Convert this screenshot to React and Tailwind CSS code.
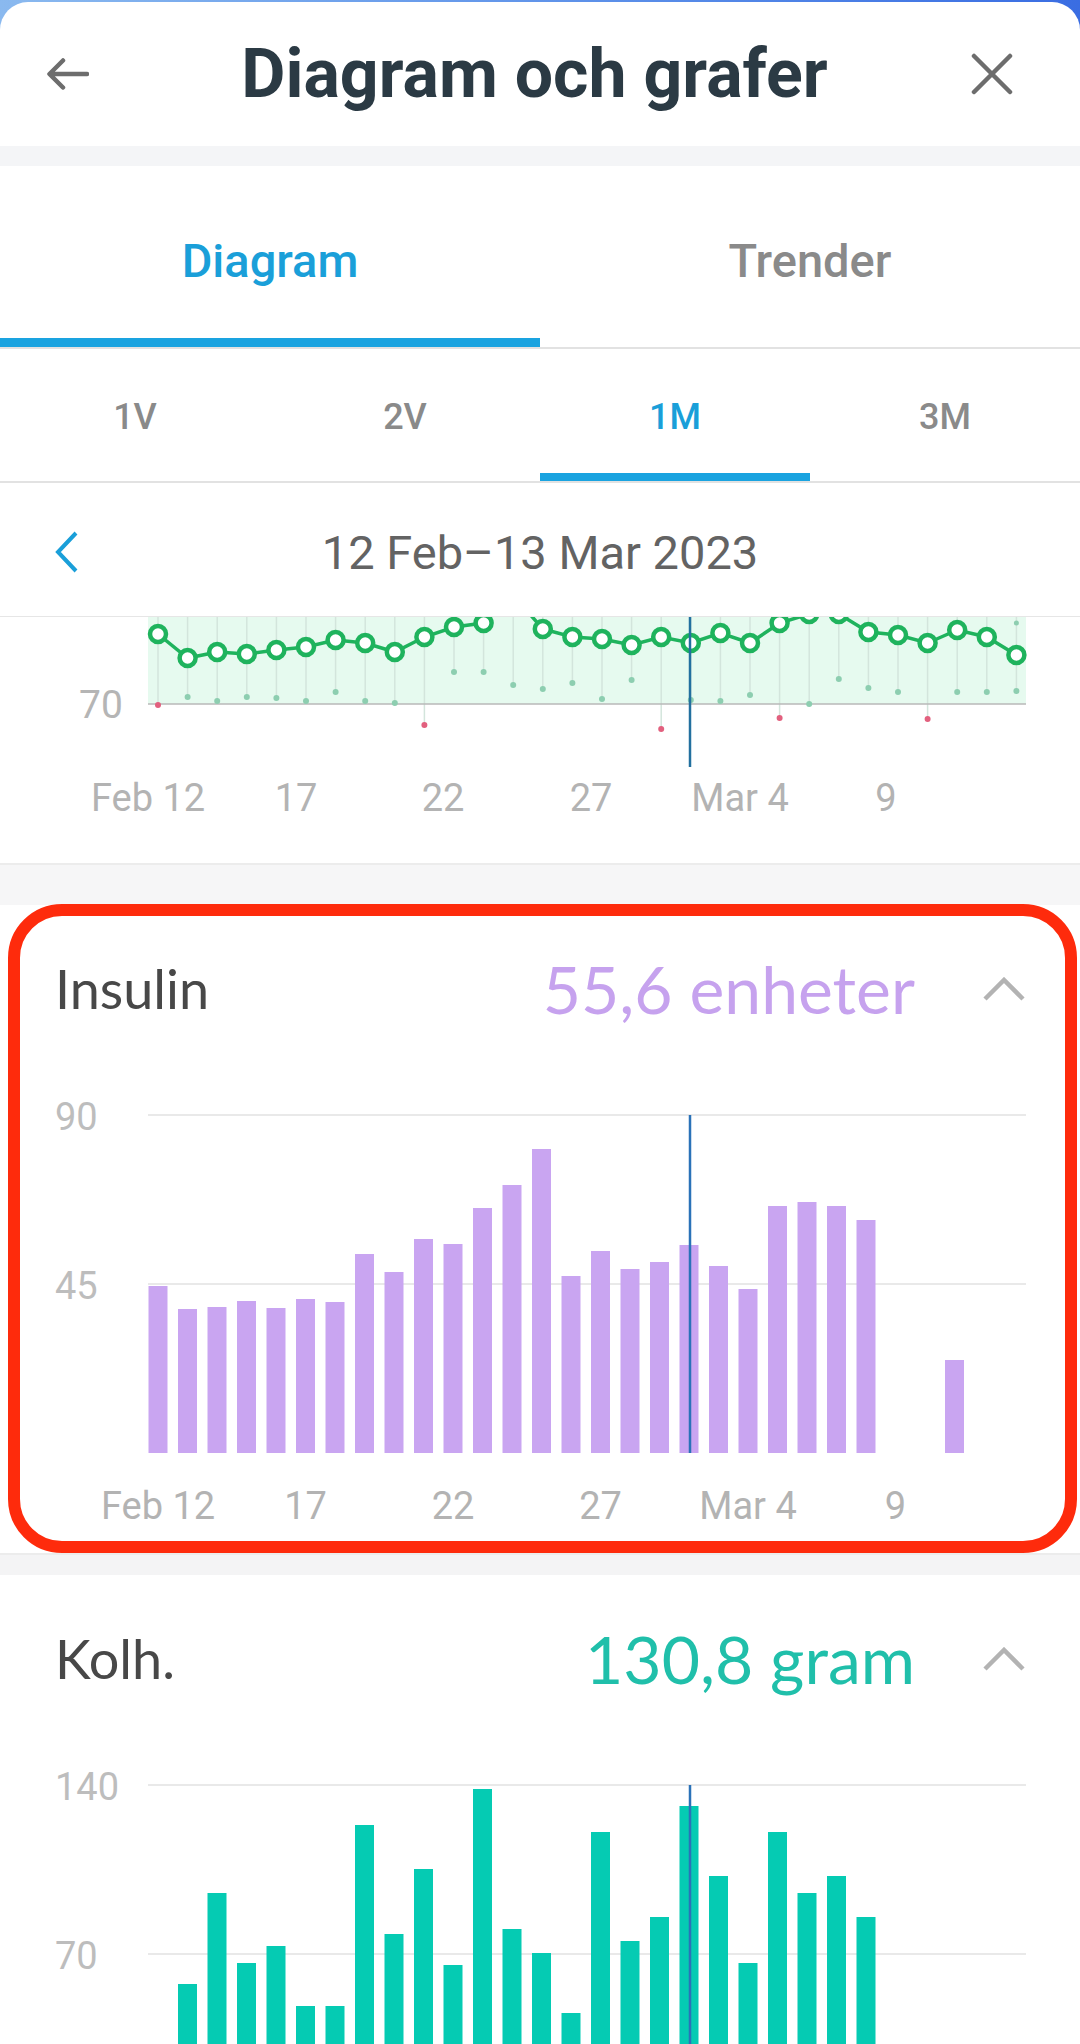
import React from "react";

const gTops = [634,658,652,654,650,647,640,643,652,637,627,623,595,629,637,639,645,637,643,633,643,623,614,614,632,635,643,630,637,655];
const gDots = [[705,1],[697],[701],[697],[698],[701],[692],[701],[703],[725,1],[672],[672],[685],[689],[683],[699],[680],[729,1],[700],[701],[695],[718,1],[704],[679],[688],[692],[719,1],[692],[692],[691]];

const insulin = [167,144,146,152,145,154,151,199,181,214,209,245,268,304,177,202,184,191,208,187,164,247,251,247,233,0,0,93];
const kolh = [0,139,230,160,177,117,117,298,189,254,158,334,194,170,110,291,182,206,317,247,160,291,230,247,206];

const gx = (i) => 158 + i * 29.6;
const bx = (i) => 158 + i * 29.5;

function GlucoseChart() {
  const pts = gTops.map((t, i) => `${gx(i)},${t - 617}`).join(" ");
  const labels = [["Feb 12", 148], ["17", 296], ["22", 443], ["27", 591], ["Mar 4", 740], ["9", 886]];
  return (
    <svg width="1080" height="246" className="block">
      <rect x="148" y="0" width="878" height="87" fill="#e6faef" />
      {gDots.map((d, i) => (
        <line key={"v" + i} x1={gx(i)} y1="0" x2={gx(i)} y2={d[0] - 617} stroke="#d3e5dc" strokeWidth="1.5" />
      ))}
      <line x1="148" y1="87" x2="1026" y2="87" stroke="#b8b8b8" strokeWidth="1.5" />
      <polyline points={pts} fill="none" stroke="#1fb35d" strokeWidth="3.5" />
      {gTops.map((t, i) => (
        <circle key={"c" + i} cx={gx(i)} cy={t - 617} r="8" fill="#ffffff" stroke="#1fb35d" strokeWidth="4.5" />
      ))}
      {gDots.map((d, i) => (
        <circle key={"d" + i} cx={gx(i)} cy={d[0] - 617} r="3" fill={d[1] ? "#e2607e" : "#8dceb0"} />
      ))}
      <circle cx={gx(29)} cy="6" r="2.5" fill="#8dceb0" />
      <line x1="690" y1="0" x2="690" y2="150" stroke="#22709f" strokeWidth="2.5" />
      <text x="79" y="101" fontFamily="Roboto, sans-serif" fontSize="39" fill="#b5b5b5">70</text>
      {labels.map(([t, x]) => (
        <text key={t} x={x} y="194" textAnchor="middle" fontFamily="Roboto, sans-serif" fontSize="38" fill="#b3b3b3">{t}</text>
      ))}
    </svg>
  );
}

function BarChart({ data, color, yTop, yMid, height, showLabels }) {
  const base = 380;
  const labels = [["Feb 12", 158], ["17", 305.5], ["22", 453], ["27", 600.5], ["Mar 4", 748], ["9", 895.5]];
  return (
    <svg width="1080" height={height} className="block">
      <line x1="148" y1="42" x2="1026" y2="42" stroke="#e9e9e9" strokeWidth="2" />
      <line x1="148" y1="211" x2="1026" y2="211" stroke="#e9e9e9" strokeWidth="2" />
      <text x="55" y="57" fontFamily="Roboto, sans-serif" fontSize="38" fill="#bdbdbd">{yTop}</text>
      <text x="55" y="226" fontFamily="Roboto, sans-serif" fontSize="38" fill="#bdbdbd">{yMid}</text>
      {data.map((h, i) =>
        h > 0 ? <rect key={i} x={bx(i) - 9.5} y={base - h} width="19" height={h} fill={color} /> : null
      )}
      <line x1="690" y1="42" x2="690" y2={Math.min(base, height)} stroke="#2a72b8" strokeWidth="2.5" />
      {showLabels &&
        labels.map(([t, x]) => (
          <text key={t} x={x} y="446" textAnchor="middle" fontFamily="Roboto, sans-serif" fontSize="38" fill="#b3b3b3">{t}</text>
        ))}
    </svg>
  );
}

function Chevron() {
  return (
    <svg width="42" height="24" viewBox="0 0 42 24" className="block">
      <polyline points="2,22 21,3 40,22" fill="none" stroke="#b3b3b3" strokeWidth="4.5" />
    </svg>
  );
}

function CardHeader({ label, value, color }) {
  return (
    <div className="h-[168px] flex items-center pl-[55px] pr-[55px] font-[Lato]">
      <div className="text-[54px] leading-none text-[#484848]">{label}</div>
      <div className="flex-1" />
      <div className={`text-[66px] leading-none ${color}`}>{value}</div>
      <div className="w-[68px]" />
      <Chevron />
    </div>
  );
}

export default function App() {
  return (
    <div className="relative w-[1080px] h-[2044px] overflow-hidden bg-gradient-to-r from-[#8ab9ef] to-[#3a6de2] font-[Roboto]">
      <div className="mt-[2px] h-[2042px] bg-white rounded-t-[28px] overflow-hidden flex flex-col">
        {/* header */}
        <div className="h-[144px] flex items-center shrink-0">
          <div className="w-[150px] pl-[47px]">
            <svg width="42" height="32" viewBox="0 0 42 32" className="block">
              <path d="M40 16H3M16 2.5L2.5 16L16 29.5" fill="none" stroke="#6d6d6d" strokeWidth="4.5" strokeLinecap="round" strokeLinejoin="round" />
            </svg>
          </div>
          <div className="flex-1 text-center pr-[11px] text-[68px] leading-none font-bold text-[#2b3a44]">Diagram och grafer</div>
          <div className="w-[150px] flex justify-end pr-[67px]">
            <svg width="42" height="42" viewBox="0 0 42 42" className="block">
              <path d="M3 3L39 39M39 3L3 39" fill="none" stroke="#6d6d6d" strokeWidth="4.5" strokeLinecap="round" />
            </svg>
          </div>
        </div>
        <div className="h-[20px] bg-[#f4f5f7] shrink-0" />

        {/* main tabs */}
        <div className="flex border-b-2 border-[#e2e2e2] shrink-0">
          <div className="flex-1 flex flex-col">
            <div className="h-[172px] pt-[16px] flex items-center justify-center text-[47px] leading-none font-medium text-[#1a9fd9]">Diagram</div>
            <div className="h-[9px] bg-[#1aa3e0]" />
          </div>
          <div className="flex-1 flex flex-col">
            <div className="h-[172px] pt-[16px] flex items-center justify-center text-[47px] leading-none font-medium text-[#8a8a8a]">Trender</div>
            <div className="h-[9px]" />
          </div>
        </div>

        {/* period tabs */}
        <div className="flex border-b-2 border-[#e2e2e2] shrink-0">
          {["1V", "2V", "1M", "3M"].map((p) => (
            <div key={p} className="flex-1 flex flex-col">
              <div className={`h-[124px] pt-[12px] flex items-center justify-center text-[36px] leading-none font-medium ${p === "1M" ? "text-[#1a9fd9]" : "text-[#8a8a8a]"}`}>{p}</div>
              <div className={`h-[8px] ${p === "1M" ? "bg-[#1aa3e0]" : ""}`} />
            </div>
          ))}
        </div>

        {/* date row */}
        <div className="h-[134px] border-b border-[#e6e6e6] flex items-center pt-[5px] relative shrink-0">
          <div className="w-[150px] pl-[55px]">
            <svg width="24" height="42" viewBox="0 0 24 42" className="block">
              <polyline points="21,2 3,21 21,40" fill="none" stroke="#1a9fd9" strokeWidth="4" />
            </svg>
          </div>
          <div className="flex-1 text-center pr-[150px] text-[47px] leading-none text-[#636363]">12 Feb–13 Mar 2023</div>
        </div>

        {/* glucose chart */}
        <div className="h-[248px] border-b-2 border-[#ececec] shrink-0">
          <GlucoseChart />
        </div>
        <div className="h-[40px] bg-[#f6f6f7] shrink-0" />

        {/* insulin */}
        <div className="h-[648px] bg-white shrink-0">
          <CardHeader label="Insulin" value="55,6 enheter" color="text-[#c6a2ee]" />
          <BarChart data={insulin} color="#c9a5f1" yTop="90" yMid="45" height={480} showLabels />
        </div>
        <div className="h-[22px] bg-[#f4f4f5] border-t-2 border-[#ececec] shrink-0" />

        {/* kolh */}
        <div className="flex-1 bg-white">
          <CardHeader label="Kolh." value="130,8 gram" color="text-[#20bfaa]" />
          <BarChart data={kolh} color="#05cbb3" yTop="140" yMid="70" height={301} showLabels={false} />
        </div>
      </div>

      {/* red annotation */}
      <div className="absolute left-[8px] top-[904px] w-[1069px] h-[649px] border-[12px] border-[#fe2b0c] rounded-[54px] pointer-events-none" />
    </div>
  );
}
